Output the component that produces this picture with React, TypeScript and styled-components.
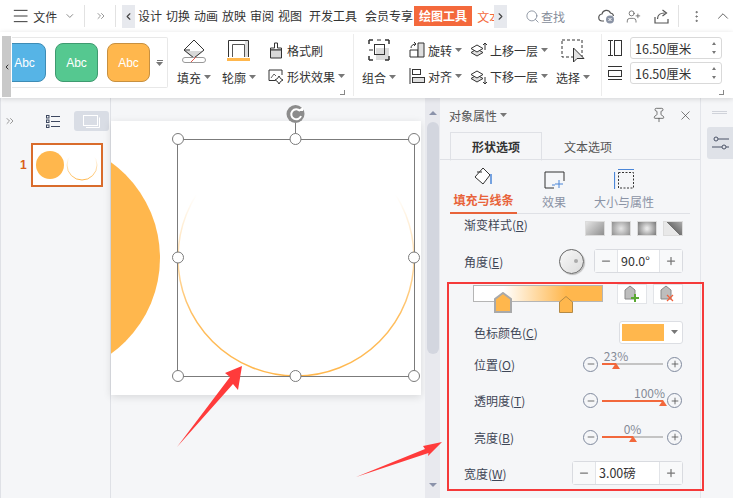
import React from "react";
import styled, { createGlobalStyle } from "styled-components";
import {
  ChevronDown,
  ChevronLeft,
  ChevronRight,
  ChevronUp,
  ChevronsRight,
  EllipsisVertical,
  Menu,
  Minus,
  Pin,
  Plus,
  Search,
  UserPlus,
  X,
} from "lucide-react";

const ORANGE = "#ffb74d";
const ACCENT = "#f2683c";

const CaretDown = () => (
  <CaretSvg viewBox="0 0 7 4" width="7" height="4">
    <path d="M0 0h7L3.5 4z" fill="#777" />
  </CaretSvg>
);

const FillIcon = () => (
  <svg width="26" height="25" viewBox="0 0 26 25">
    <path d="M3 12 13 20 23 12z" fill="#d8d8d8" />
    <path d="M13 1 23 11 13 19 3 11z" fill="none" stroke="#333" />
    <path d="M3 11h6" stroke="#333" />
    <rect x="1.5" y="18.5" width="23" height="5" rx="2.5" fill="#fff" stroke="#999" />
    <path d="M10 23 15 18" stroke="#e2574c" />
  </svg>
);

const OutlineIcon = () => (
  <svg width="24" height="24" viewBox="0 0 24 24">
    <path d="M1.5 18V1.5h20V18" fill="none" stroke="#333" />
    <path d="M5.5 18V5.5h12V18" fill="none" stroke="#555" />
    <path d="M18 2h3v16h-3z" fill="#ddd" />
    <rect x="0" y="19" width="23" height="3" fill={ORANGE} />
  </svg>
);

const BrushIcon = () => (
  <svg width="14" height="17" viewBox="0 0 14 17">
    <path d="M5.5 1h3v5h4v2h-11V6h4z" fill="#fff" stroke="#333" />
    <path d="M1.5 8h11v8h-11z" fill="#d8d8d8" stroke="#333" />
  </svg>
);

const EffectIcon = () => (
  <svg width="16" height="15" viewBox="0 0 16 15">
    <path d="M7 11.5H1V1h13v5" fill="none" stroke="#333" />
    <path d="M3 9 6 5l2 2" fill="none" stroke="#666" />
    <path d="M11 7l1.5 2.5L15 11l-2.500 1.500L11 15l-1.500-2.500L7 11l2.500-1.500z" fill="none" stroke="#333" />
  </svg>
);

const GroupIcon = () => (
  <svg width="22" height="22" viewBox="0 0 22 22">
    <rect x="8" y="9" width="13" height="12" fill="#dcdcdc" />
    <rect x="6.500" y="5.500" width="10" height="10" fill="none" stroke="#333" />
    <path d="M1 1h4M1 1v4M17 1h4M21 1v4M1 21h4M1 21v-4M17 21h4M21 21v-4" stroke="#333" strokeWidth="1.500" fill="none" />
    <path d="M1 11h4M9 1h4" stroke="#333" />
  </svg>
);

const RotateIcon = () => (
  <svg width="16" height="16" viewBox="0 0 16 16">
    <path d="M1 15V8h8v7z" fill="none" stroke="#333" />
    <path d="M9 15V1h6v14z" fill="#dedede" stroke="#333" />
    <path d="M2 6c0-2.500 2-4 5-4M5 0l2 2-2 2" fill="none" stroke="#333" />
  </svg>
);

const AlignIcon = () => (
  <svg width="16" height="16" viewBox="0 0 16 16">
    <path d="M1 0v16" stroke="#333" />
    <rect x="3.500" y="1.500" width="8" height="5" fill="#fff" stroke="#333" />
    <rect x="3.500" y="9.500" width="12" height="5" fill="#dedede" stroke="#333" />
  </svg>
);

const LayerIcon = ({ up }: { up?: boolean }) => (
  <svg width="17" height="17" viewBox="0 0 17 17">
    <path d="M1 10.500 7 7l6 3.500L7 14z" fill="#dedede" stroke="#333" />
    <path d="M1 6.500 7 3l6 3.500L7 10z" fill="#fff" stroke="#333" />
    {up ? (
      <path d="M15 8V1M13 3l2-2 2 2" fill="none" stroke="#333" />
    ) : (
      <path d="M15 9v7M13 14l2 2 2-2" fill="none" stroke="#333" />
    )}
  </svg>
);

const SelectIcon = () => (
  <svg width="24" height="25" viewBox="0 0 24 25">
    <rect x="1" y="1" width="20" height="17" fill="none" stroke="#333" strokeDasharray="3 2" />
    <path d="M12.500 9 12.500 23 16 19.500H23z" fill="#e3e3e3" stroke="#333" />
  </svg>
);

const CloudIcon = () => (
  <svg width="17" height="16" viewBox="0 0 17 16">
    <path d="M6 13H4.500a3.500 3.500 0 0 1-.5-7 4.500 4.500 0 0 1 8.500-1A3.500 3.500 0 0 1 15.500 8" fill="none" stroke="#555" strokeWidth="1.200" />
    <circle cx="12" cy="11.500" r="4" fill="#8a93a5" />
    <path d="M10.500 10l3 3M13.500 10l-3 3" stroke="#fff" />
  </svg>
);

const ShareIcon = () => (
  <svg width="15" height="15" viewBox="0 0 15 15">
    <path d="M1 8v6h13v-4" fill="none" stroke="#555" strokeWidth="1.200" />
    <path d="M3.500 10c0-4 3-6 7-6M8.500 1l4 3-4 3" fill="none" stroke="#555" strokeWidth="1.200" />
  </svg>
);

const HeightIcon = () => (
  <svg width="14" height="16" viewBox="0 0 14 16">
    <path d="M0 .5h5M0 15.500h5M2.500 1v14" stroke="#333" />
    <rect x="6.500" y=".5" width="7" height="15" fill="none" stroke="#333" />
  </svg>
);

const WidthIcon = () => (
  <svg width="14" height="14" viewBox="0 0 14 14">
    <path d="M0 .5h14M0 13.500h14" stroke="#333" />
    <rect x=".5" y="4.500" width="13" height="6" fill="none" stroke="#333" />
  </svg>
);

const OutlineViewIcon = () => (
  <svg width="14" height="13" viewBox="0 0 14 13">
    <path d="M5 1.500h9M5 6.500h9M5 11.500h9" stroke="#3d4860" />
    <rect x=".5" y=".5" width="2.500" height="2.500" fill="none" stroke="#3d4860" />
    <rect x=".5" y="5" width="2.500" height="2.500" fill="none" stroke="#3d4860" />
    <rect x=".5" y="10" width="2.500" height="2.500" fill="none" stroke="#3d4860" />
  </svg>
);

const SlideViewIcon = () => (
  <svg width="17" height="13" viewBox="0 0 17 13">
    <rect x=".5" y=".5" width="14" height="10" fill="none" stroke="#fff" />
    <path d="M16.500 2.500V12.500H3" fill="none" stroke="#fff" />
  </svg>
);

const Thumbnail = () => (
  <svg width="68" height="40" viewBox="0 0 68 40">
    <defs>
      <linearGradient id="thumbRing" x1="0" y1="0" x2="0" y2="1">
        <stop offset="0.23" stopColor={ORANGE} stopOpacity="0" />
        <stop offset="1" stopColor={ORANGE} />
      </linearGradient>
    </defs>
    <circle cx="17" cy="20" r="14" fill={ORANGE} />
    <circle cx="49" cy="20" r="15" fill="none" stroke="url(#thumbRing)" />
  </svg>
);

const ShapeTabFill = () => (
  <svg width="20" height="20" viewBox="0 0 20 20">
    <path d="M9 1 16 8 9 17 1 10z" fill="#fff" stroke="#333" />
    <path d="M3 5h5" stroke="#333" />
    <path d="M17 7v10" stroke="#4a86d8" strokeWidth="1.500" />
  </svg>
);

const ShapeTabEffect = () => (
  <svg width="21" height="18" viewBox="0 0 21 18">
    <path d="M10 17H1V1h19v9" fill="none" stroke="#333" />
    <path d="M15 9v8M11 13h8M8 14h3" stroke="#4a86d8" />
  </svg>
);

const ShapeTabSize = () => (
  <svg width="20" height="20" viewBox="0 0 20 20">
    <rect x="4.500" y="3.500" width="15" height="15.500" fill="none" stroke="#333" strokeDasharray="2 1.500" />
    <path d="M4 .5h16M.5 3v17" stroke="#4a86d8" strokeWidth="1.200" />
  </svg>
);

const StopMarker = ({ selected }: { selected?: boolean }) =>
  selected ? (
    <svg width="18" height="21" viewBox="0 0 18 21">
      <path d="M9 1 17 7V20H1V7z" fill={ORANGE} stroke="#a9a9a9" strokeWidth="2" />
    </svg>
  ) : (
    <svg width="14" height="17" viewBox="0 0 14 17">
      <path d="M7 .5 13.500 6V16.500H.5V6z" fill={ORANGE} stroke="#b58a45" />
    </svg>
  );

const StopButtonIcon = ({ remove }: { remove?: boolean }) => (
  <svg width="16" height="18" viewBox="0 0 16 18">
    <path d="M6 1 11 5V14H1V5z" fill="#bdbdbd" stroke="#888" />
    {remove ? (
      <path d="M7 10l6 6M13 10l-6 6" stroke="#f0603c" strokeWidth="1.300" />
    ) : (
      <path d="M11 9v8M7 13h8" stroke="#5aa832" strokeWidth="2" />
    )}
  </svg>
);

const SlidersIcon = () => (
  <svg width="17" height="15" viewBox="0 0 17 15">
    <circle cx="4" cy="3" r="2" fill="none" stroke="#4a5266" />
    <circle cx="12" cy="11" r="2" fill="none" stroke="#4a5266" />
    <path d="M6 3h11M0 11h10M14 11h3" stroke="#4a5266" />
  </svg>
);

const GRADIENT_STYLES = [
  "linear-gradient(135deg,#e4e4e4,#8f8f8f)",
  "radial-gradient(circle,#e6e6e6,#8f8f8f)",
  "radial-gradient(circle,#e6e6e6 10%,#777)",
  "linear-gradient(45deg,#e8e8e8 50%,#6f6f6f 50%,#aaa)",
];

const Slider = ({ label, pos, labelPos, name }: { label: string; pos: number; labelPos: number; name: React.ReactNode }) => (
  <PanelRow $indent>
    <PanelLabel>{name}</PanelLabel>
    <SliderWrap>
      <RoundButton><Minus size={10} /></RoundButton>
      <Track>
        <TrackFill style={{ width: `${pos}%` }} />
        <TrackValue style={{ left: `${labelPos}%` }}>{label}</TrackValue>
        <TrackThumb style={{ left: `${pos}%` }} />
      </Track>
      <RoundButton><Plus size={10} /></RoundButton>
    </SliderWrap>
  </PanelRow>
);

const Spin = ({ value, wide }: { value: string; wide?: boolean }) => (
  <SpinBox $wide={wide}>
    <SpinBtn><Minus size={12} strokeWidth={2.500} /></SpinBtn>
    <SpinValue>{value}</SpinValue>
    <SpinBtn><Plus size={12} strokeWidth={2.500} /></SpinBtn>
  </SpinBox>
);

const SizeField = ({ value }: { value: string }) => (
  <SizeInput>
    {value}
    <SpinArrows>
      <SpinArrow $up />
      <SpinArrow />
    </SpinArrows>
  </SizeInput>
);

export default function App() {
  return (
    <Page>
      <GlobalStyle />
      <TitleBar>
        <FileMenu>
          <Menu size={20} strokeWidth={1.200} />
          <span>文件</span>
          <ChevronDown size={12} color="#888" />
        </FileMenu>
        <BarSep $left={8} />
        <ChevronsRight size={12} color="#999" style={{ marginLeft: 10 }} />
        <BarSep $left={8} />
        <ScrollTab $left={6}><ChevronLeft size={11} strokeWidth={2.500} /></ScrollTab>
        <MenuTabs>
          <MenuTab>设计</MenuTab>
          <MenuTab>切换</MenuTab>
          <MenuTab>动画</MenuTab>
          <MenuTab>放映</MenuTab>
          <MenuTab>审阅</MenuTab>
          <MenuTab>视图</MenuTab>
          <MenuTab $left={3}>开发工具</MenuTab>
          <MenuTab $left={4}>会员专享</MenuTab>
          <ActiveTab>绘图工具</ActiveTab>
          <ClippedTab>文本工具</ClippedTab>
        </MenuTabs>
        <ScrollTab $left={0}><ChevronRight size={11} strokeWidth={2.500} /></ScrollTab>
        <SearchBox>
          <Search size={15} strokeWidth={1.300} color="#7d8594" />
          <span>查找</span>
        </SearchBox>
        <BarIcon $left={33}><CloudIcon /></BarIcon>
        <BarIcon $left={11}><UserPlus size={15} strokeWidth={1.200} color="#555" /></BarIcon>
        <BarIcon $left={13}><ShareIcon /></BarIcon>
        <BarSep $left={9} />
        <BarIcon $left={10}><EllipsisVertical size={15} strokeWidth={1.500} color="#666" /></BarIcon>
        <BarIcon $left={10}><ChevronUp size={18} strokeWidth={1.200} color="#555" /></BarIcon>
      </TitleBar>

      <Ribbon>
        <GalleryScroll><ChevronLeft size={8} strokeWidth={3} /></GalleryScroll>
        <Gallery>
          <Swatches>
            <Swatch $bg="#56b4e6" $line="#3e8cb5">Abc</Swatch>
            <Swatch $bg="#55c890" $line="#3f9a70">Abc</Swatch>
            <Swatch $bg={ORANGE} $line="#c79040">Abc</Swatch>
          </Swatches>
          <GalleryMore>
            <MoreBar />
            <CaretDown />
          </GalleryMore>
        </Gallery>
        <BigButton $left={8} $width={36}>
          <BigIcon><FillIcon /></BigIcon>
          <BigLabel>填充<CaretDown /></BigLabel>
        </BigButton>
        <BigButton $left={9} $width={36}>
          <BigIcon><OutlineIcon /></BigIcon>
          <BigLabel>轮廓<CaretDown /></BigLabel>
        </BigButton>
        <SmallColumn $left={10} $width={78}>
          <SmallButton><SmallIcon><BrushIcon /></SmallIcon>格式刷</SmallButton>
          <SmallButton><SmallIcon><EffectIcon /></SmallIcon>形状效果<CaretDown /></SmallButton>
          <Launcher />
        </SmallColumn>
        <RibbonSep $left={8} />
        <BigButton $left={9} $width={32}>
          <BigIcon><GroupIcon /></BigIcon>
          <BigLabel>组合<CaretDown /></BigLabel>
        </BigButton>
        <SmallColumn $left={13} $width={54}>
          <SmallButton><SmallIcon><RotateIcon /></SmallIcon>旋转<CaretDown /></SmallButton>
          <SmallButton><SmallIcon><AlignIcon /></SmallIcon>对齐<CaretDown /></SmallButton>
        </SmallColumn>
        <SmallColumn $left={8} $width={76}>
          <SmallButton><SmallIcon><LayerIcon up /></SmallIcon>上移一层<CaretDown /></SmallButton>
          <SmallButton><SmallIcon><LayerIcon /></SmallIcon>下移一层<CaretDown /></SmallButton>
        </SmallColumn>
        <BigButton $left={9} $width={36}>
          <BigIcon><SelectIcon /></BigIcon>
          <BigLabel>选择<CaretDown /></BigLabel>
        </BigButton>
        <RibbonSep $left={10} />
        <SizeColumn>
          <SizeRow>
            <HeightIcon />
            <SizeField value="16.50厘米" />
          </SizeRow>
          <SizeRow>
            <WidthIcon />
            <SizeField value="16.50厘米" />
          </SizeRow>
          <Launcher />
        </SizeColumn>
      </Ribbon>

      <Workspace>
        <Sidebar>
          <SidebarTools>
            <ChevronsRight size={12} color="#999" />
            <OutlineViewIcon />
            <ViewButton><SlideViewIcon /></ViewButton>
          </SidebarTools>
          <ThumbRow>
            <ThumbNumber>1</ThumbNumber>
            <ThumbFrame><Thumbnail /></ThumbFrame>
          </ThumbRow>
        </Sidebar>

        <Canvas>
          <Slide>
            <SlideDrawing viewBox="111 121 310 274">
              <defs>
                <clipPath id="slideClip">
                  <rect x="111" y="121" width="310" height="274" />
                </clipPath>
                <linearGradient id="ring" x1="0" y1="0" x2="0" y2="1">
                  <stop offset="0.23" stopColor={ORANGE} stopOpacity="0" />
                  <stop offset="0.75" stopColor={ORANGE} stopOpacity="0.9" />
                  <stop offset="1" stopColor={ORANGE} />
                </linearGradient>
              </defs>
              <circle cx="42" cy="258" r="118" fill={ORANGE} clipPath="url(#slideClip)" />
              <circle cx="296" cy="258" r="118" fill="none" stroke="url(#ring)" strokeWidth="1.500" />
              <rect x="177.500" y="139.500" width="237" height="237" fill="none" stroke="#7b7b7b" />
              <path d="M295.500 123v16" stroke="#7b7b7b" />
              <circle cx="295.500" cy="114" r="9" fill="#8c8c8c" />
              <path d="M300 111a5 5 0 1 0 1 5" fill="none" stroke="#fff" strokeWidth="2" />
              <path d="M297 111h6v-4z" fill="#fff" />
              {[
                [178, 139],
                [295.500, 139],
                [414, 139],
                [178, 257.500],
                [414, 257.500],
                [178, 376],
                [295.500, 376],
                [414, 376],
              ].map(([cx, cy]) => (
                <circle key={`${cx}-${cy}`} cx={cx} cy={cy} r="5.500" fill="#fff" stroke="#7b7b7b" />
              ))}
            </SlideDrawing>
          </Slide>
        </Canvas>

        <ScrollBar>
          <ScrollArrow $up />
          <ScrollThumb />
          <ScrollArrow />
        </ScrollBar>

        <Panel>
          <PanelHeader>
            <PanelTitle>对象属性<CaretDown /></PanelTitle>
            <PanelTools>
              <Pin size={16} strokeWidth={1.100} color="#444" />
              <X size={15} strokeWidth={1.100} color="#444" />
            </PanelTools>
          </PanelHeader>
          <OptionTabs>
            <OptionTab $active>形状选项</OptionTab>
            <OptionTab>文本选项</OptionTab>
          </OptionTabs>
          <ShapeTabs>
            <ShapeTab $width={67} $active>
              <ShapeTabFill />
              <span>填充与线条</span>
            </ShapeTab>
            <ShapeTab $width={74}>
              <ShapeTabEffect />
              <span>效果</span>
            </ShapeTab>
            <ShapeTab $width={66}>
              <ShapeTabSize />
              <span>大小与属性</span>
            </ShapeTab>
          </ShapeTabs>
          <PanelBody>
            <PanelRow $height={20}>
              <PanelLabel>渐变样式(<u>R</u>)</PanelLabel>
              <StyleList>
                {GRADIENT_STYLES.map((bg) => (
                  <StyleThumb key={bg} style={{ background: bg }} />
                ))}
              </StyleList>
            </PanelRow>
            <PanelRow $top={15}>
              <PanelLabel>角度(<u>E</u>)</PanelLabel>
              <AngleControls>
                <Dial><DialDot /></Dial>
                <Spin value="90.0°" />
              </AngleControls>
            </PanelRow>
            <GradientRow>
              <GradientBar>
                <GradientStop $left={23} $selected><StopMarker selected /></GradientStop>
                <GradientStop $left={72}><StopMarker /></GradientStop>
              </GradientBar>
              <StopButtons>
                <StopButton><StopButtonIcon /></StopButton>
                <StopButton><StopButtonIcon remove /></StopButton>
              </StopButtons>
            </GradientRow>
            <PanelRow $indent $top={16}>
              <PanelLabel>色标颜色(<u>C</u>)</PanelLabel>
              <ColorPicker>
                <ColorChip />
                <CaretDown />
              </ColorPicker>
            </PanelRow>
            <SliderList>
              <Slider name={<>位置(<u>O</u>)</>} label="23%" pos={23} labelPos={23} />
              <Slider name={<>透明度(<u>T</u>)</>} label="100%" pos={100} labelPos={78} />
              <Slider name={<>亮度(<u>B</u>)</>} label="0%" pos={50} labelPos={50} />
            </SliderList>
            <PanelRow $top={12}>
              <PanelLabel>宽度(<u>W</u>)</PanelLabel>
              <Spin value="3.00磅" wide />
            </PanelRow>
          </PanelBody>
        </Panel>

        <RightRail>
          <RailGrip />
          <RailButton><SlidersIcon /></RailButton>
        </RightRail>
      </Workspace>

      <RedFrame />
      <ArrowLayer viewBox="0 0 733 498">
        <polygon points="242,366 225,373 230,377 177,447 233,384 238,390" fill="#ff3b3b" />
        <polygon points="442,442 423,446 425,449 356,477 428.500,453 428,456" fill="#ff3b3b" />
      </ArrowLayer>
    </Page>
  );
}

const GlobalStyle = createGlobalStyle`
  html, body {
    margin: 0;
    padding: 0;
    background: #f5f6f8;
    overflow: hidden;
  }
  * {
    box-sizing: border-box;
  }
  body {
    font-family: "Noto Sans CJK SC", "Liberation Sans", sans-serif;
    font-size: 12px;
    color: #3a3f4b;
  }
`;

const Page = styled.div`
  position: relative;
  display: flex;
  flex-direction: column;
  width: 733px;
  height: 498px;
  overflow: hidden;
`;

const CaretSvg = styled.svg`
  flex: none;
  margin-left: 3px;
`;

const TitleBar = styled.div`
  display: flex;
  align-items: center;
  height: 32px;
  padding-left: 14px;
  background: #fff;
  flex: none;
`;

const FileMenu = styled.div`
  display: flex;
  align-items: center;
  gap: 3px;
  width: 65px;
  margin-left: -3px;
  color: #333;
  white-space: nowrap;
  flex: none;

  span {
    margin-right: 4px;
  }
`;

const BarSep = styled.div<{ $left: number }>`
  width: 1px;
  height: 22px;
  margin-left: ${(p) => p.$left}px;
  background: #e2e2e2;
  flex: none;
`;

const ScrollTab = styled.div<{ $left: number }>`
  display: flex;
  align-items: center;
  justify-content: center;
  width: 13px;
  height: 23px;
  margin-left: ${(p) => p.$left}px;
  background: #e7e9ee;
  color: #444;
  flex: none;
`;

const MenuTabs = styled.div`
  display: flex;
  align-items: center;
  width: 359px;
  padding-left: 3px;
  overflow: hidden;
  flex: none;
`;

const MenuTab = styled.div<{ $left?: number }>`
  margin-left: ${(p) => p.$left ?? 0}px;
  margin-right: 4px;
  line-height: 20px;
  color: #333;
  white-space: nowrap;
  flex: none;
`;

const ActiveTab = styled.div`
  width: 58px;
  height: 20px;
  margin-left: -3px;
  line-height: 20px;
  text-align: center;
  background: #f4693c;
  color: #fff;
  font-weight: 700;
  flex: none;
`;

const ClippedTab = styled.div`
  margin-left: 5px;
  color: #f4693c;
  white-space: nowrap;
  flex: none;
`;

const SearchBox = styled.div`
  display: flex;
  align-items: center;
  gap: 1px;
  margin-left: 18px;
  color: #868d9a;
  white-space: nowrap;
  flex: none;
`;

const BarIcon = styled.div<{ $left: number }>`
  display: flex;
  align-items: center;
  margin-left: ${(p) => p.$left}px;
  flex: none;
`;

const Ribbon = styled.div`
  position: relative;
  z-index: 2;
  display: flex;
  height: 66px;
  padding-left: 2px;
  background: #fff;
  box-shadow: 0 1px 5px rgba(0, 0, 0, 0.14);
  flex: none;
`;

const GalleryScroll = styled.div`
  display: flex;
  align-items: center;
  justify-content: center;
  width: 9px;
  height: 61px;
  margin-top: 4px;
  background: #c9c9c9;
  color: #333;
  flex: none;
`;

const Gallery = styled.div`
  display: flex;
  align-items: center;
  justify-content: space-between;
  width: 156px;
  height: 51px;
  margin-top: 5px;
  margin-left: 1px;
  padding-right: 4px;
  border: 1px solid #e8e8e8;
  border-left: none;
  border-radius: 0 2px 2px 0;
  overflow: hidden;
  flex: none;
`;

const Swatches = styled.div`
  display: flex;
  gap: 9px;
  margin-left: -9px;
`;

const Swatch = styled.div<{ $bg: string; $line: string }>`
  display: flex;
  align-items: center;
  justify-content: center;
  width: 43px;
  height: 39px;
  border: 1px solid ${(p) => p.$line};
  border-radius: 8px;
  background: ${(p) => p.$bg};
  color: #fff;
  font-family: "Liberation Sans", sans-serif;
  font-size: 12px;
  flex: none;
`;

const GalleryMore = styled.div`
  display: flex;
  flex-direction: column;
  align-items: center;
  gap: 1px;
`;

const MoreBar = styled.div`
  width: 6px;
  height: 1px;
  margin-left: 3px;
  background: #777;
`;

const BigButton = styled.div<{ $left: number; $width: number }>`
  display: flex;
  flex-direction: column;
  align-items: center;
  width: ${(p) => p.$width}px;
  margin-left: ${(p) => p.$left}px;
  padding-top: 7px;
  flex: none;
`;

const BigIcon = styled.div`
  display: flex;
  align-items: flex-start;
  justify-content: center;
  height: 29px;
`;

const BigLabel = styled.div`
  display: flex;
  align-items: center;
  height: 18px;
  color: #333;
  white-space: nowrap;
`;

const SmallColumn = styled.div<{ $left: number; $width: number }>`
  position: relative;
  display: flex;
  flex-direction: column;
  gap: 2px;
  width: ${(p) => p.$width}px;
  margin-left: ${(p) => p.$left}px;
  padding-top: 6px;
  flex: none;
`;

const SmallButton = styled.div`
  display: flex;
  align-items: center;
  height: 24px;
  color: #333;
  white-space: nowrap;
`;

const SmallIcon = styled.div`
  display: flex;
  align-items: center;
  justify-content: center;
  width: 17px;
  margin-right: 3px;
  flex: none;
`;

const Launcher = styled.div`
  position: absolute;
  right: 0;
  bottom: 3px;
  width: 5px;
  height: 5px;
  border-right: 1px solid #888;
  border-bottom: 1px solid #888;
`;

const RibbonSep = styled.div<{ $left: number }>`
  width: 1px;
  height: 62px;
  margin-top: 2px;
  margin-left: ${(p) => p.$left}px;
  background: #ececec;
  flex: none;
`;

const SizeColumn = styled.div`
  position: relative;
  display: flex;
  flex-direction: column;
  gap: 3px;
  width: 116px;
  margin-left: 6px;
  padding-top: 5px;
  flex: none;
`;

const SizeRow = styled.div`
  display: flex;
  align-items: center;
  justify-content: space-between;
  width: 114px;
  height: 22px;
`;

const SizeInput = styled.div`
  display: flex;
  align-items: center;
  justify-content: space-between;
  width: 92px;
  height: 22px;
  padding: 0 5px 0 4px;
  border: 1px solid #d9d9d9;
  border-radius: 3px;
  font-size: 12.500px;
  color: #333;
`;

const SpinArrows = styled.div`
  display: flex;
  flex-direction: column;
  gap: 6px;
`;

const SpinArrow = styled.div<{ $up?: boolean }>`
  width: 0;
  height: 0;
  border-left: 2.500px solid transparent;
  border-right: 2.500px solid transparent;
  ${(p) => (p.$up ? "border-bottom: 3px solid #777;" : "border-top: 3px solid #777;")}
`;

const Workspace = styled.div`
  display: flex;
  flex: 1;
  min-height: 0;
`;

const Sidebar = styled.div`
  width: 111px;
  border-left: 1px solid #dfe1e6;
  border-right: 1px solid #dfe1e6;
  flex: none;
`;

const SidebarTools = styled.div`
  display: flex;
  align-items: center;
  height: 20px;
  margin-top: 13px;
  padding-left: 3px;
  gap: 30px;
`;

const ViewButton = styled.div`
  display: flex;
  align-items: center;
  justify-content: center;
  width: 35px;
  height: 20px;
  margin-left: -16px;
  border-radius: 3px;
  background: #d9dde5;
`;

const ThumbRow = styled.div`
  display: flex;
  align-items: center;
  margin-top: 12px;
  padding-left: 19px;
`;

const ThumbNumber = styled.div`
  width: 11px;
  color: #d9601a;
  font-family: "Liberation Sans", sans-serif;
  font-weight: 700;
`;

const ThumbFrame = styled.div`
  display: flex;
  width: 72px;
  height: 44px;
  border: 2px solid #d96c2c;
  background: #fff;
`;

const Canvas = styled.div`
  width: 314px;
  padding-top: 23px;
  flex: none;
`;

const Slide = styled.div`
  width: 310px;
  height: 274px;
  background: #fff;
  box-shadow: 0 2px 8px rgba(0, 0, 0, 0.12);
`;

const SlideDrawing = styled.svg`
  display: block;
  width: 310px;
  height: 274px;
  overflow: visible;
`;

const ScrollBar = styled.div`
  display: flex;
  flex-direction: column;
  align-items: center;
  width: 15px;
  padding: 13px 0 11px;
  background: #e8e9ee;
  flex: none;
`;

const ScrollArrow = styled.div<{ $up?: boolean }>`
  width: 0;
  height: 0;
  border-left: 4px solid transparent;
  border-right: 4px solid transparent;
  ${(p) => (p.$up ? "border-bottom: 4px solid #8b93aa;" : "border-top: 4px solid #8b93aa;")}
  ${(p) => (!p.$up ? "margin-top: auto;" : "")}
`;

const ScrollThumb = styled.div`
  width: 12px;
  height: 232px;
  margin-top: 7px;
  border-radius: 6px;
  background: #d3d6df;
`;

const Panel = styled.div`
  display: flex;
  flex-direction: column;
  width: 260px;
  background: #f5f6f8;
  flex: none;
`;

const PanelHeader = styled.div`
  display: flex;
  align-items: center;
  justify-content: space-between;
  height: 34px;
  padding: 0 7px 0 9px;
  flex: none;
`;

const PanelTitle = styled.div`
  display: flex;
  align-items: center;
  color: #555;
`;

const PanelTools = styled.div`
  display: flex;
  align-items: center;
  gap: 11px;
`;

const OptionTabs = styled.div`
  display: flex;
  height: 28px;
  padding-left: 10px;
  border-bottom: 1px solid #dfe1e6;
  flex: none;
`;

const OptionTab = styled.div<{ $active?: boolean }>`
  display: flex;
  align-items: center;
  justify-content: center;
  width: 92px;
  height: ${(p) => (p.$active ? 29 : 28)}px;
  border: ${(p) => (p.$active ? "1px solid #dfe1e6" : "none")};
  border-bottom: ${(p) => (p.$active ? "1px solid #f5f6f8" : "none")};
  font-weight: ${(p) => (p.$active ? 700 : 400)};
  color: ${(p) => (p.$active ? "#333" : "#555")};
`;

const ShapeTabs = styled.div`
  display: flex;
  height: 54px;
  margin: 0 10px;
  border-bottom: 1px solid #dfe1e6;
  flex: none;
`;

const ShapeTab = styled.div<{ $width: number; $active?: boolean }>`
  display: flex;
  flex-direction: column;
  align-items: center;
  justify-content: flex-end;
  gap: 4px;
  width: ${(p) => p.$width}px;
  height: 54px;
  padding-bottom: 4px;
  border-bottom: ${(p) => (p.$active ? `2px solid #e8633a` : "none")};
  color: ${(p) => (p.$active ? "#e8633a" : "#8b93a5")};
  font-weight: ${(p) => (p.$active ? 700 : 400)};
  white-space: nowrap;
`;

const PanelBody = styled.div`
  flex: 1;
  min-height: 0;
  padding: 0 17px 0 24px;
  overflow: hidden;
`;

const PanelRow = styled.div<{ $height?: number; $top?: number; $indent?: boolean }>`
  display: flex;
  align-items: center;
  justify-content: space-between;
  height: ${(p) => p.$height ?? 24}px;
  margin-top: ${(p) => p.$top ?? 0}px;
  padding-left: ${(p) => (p.$indent ? 10 : 0)}px;
`;

const PanelLabel = styled.div`
  color: #3f4656;
  white-space: nowrap;
`;

const StyleList = styled.div`
  display: flex;
  gap: 6px;
`;

const StyleThumb = styled.div`
  width: 20px;
  height: 15px;
  margin-top: 8px;
  border: 1px solid #dcdcdc;
`;

const AngleControls = styled.div`
  display: flex;
  align-items: center;
  gap: 10px;
`;

const Dial = styled.div`
  display: flex;
  align-items: center;
  justify-content: flex-end;
  width: 25px;
  height: 25px;
  padding-right: 5px;
  border: 1px solid #666;
  border-radius: 50%;
  background: linear-gradient(135deg, #f8f8f8, #dcdcdc);
  box-shadow: 1px 1px 1px #bbb;
`;

const DialDot = styled.div`
  width: 4px;
  height: 4px;
  border-radius: 50%;
  background: #aaa;
`;

const SpinBox = styled.div<{ $wide?: boolean }>`
  display: flex;
  align-items: center;
  width: ${(p) => (p.$wide ? 111 : 89)}px;
  height: 24px;
  border: 1px solid #d9dbe0;
  border-radius: 3px;
  background: #fff;
`;

const SpinBtn = styled.div`
  display: flex;
  align-items: center;
  justify-content: center;
  width: 22px;
  height: 22px;
  background: #f8f9fa;
  color: #777;
  flex: none;
`;

const SpinValue = styled.div`
  flex: 1;
  height: 22px;
  padding-left: 3px;
  border-left: 1px solid #e2e4e8;
  border-right: 1px solid #e2e4e8;
  line-height: 22px;
  font-size: 12.500px;
  color: #333;
  white-space: nowrap;
`;

const GradientRow = styled.div`
  display: flex;
  justify-content: space-between;
  height: 20px;
  margin-top: 11px;
  padding-left: 9px;
`;

const GradientBar = styled.div`
  position: relative;
  width: 130px;
  height: 17px;
  margin-top: 1px;
  border: 1px solid #b5b5b5;
  background: linear-gradient(90deg, #fff 23%, ${ORANGE} 72%);
`;

const GradientStop = styled.div<{ $left: number; $selected?: boolean }>`
  position: absolute;
  left: ${(p) => p.$left}%;
  top: ${(p) => (p.$selected ? 6 : 10)}px;
  display: flex;
  transform: translateX(-50%);
`;

const StopButtons = styled.div`
  display: flex;
  gap: 6px;
`;

const StopButton = styled.div`
  display: flex;
  align-items: center;
  justify-content: center;
  width: 30px;
  height: 20px;
  border: 1px solid #e2e4e8;
  background: #fff;
`;

const ColorPicker = styled.div`
  display: flex;
  align-items: center;
  width: 64px;
  height: 23px;
  padding: 0 4px 0 2px;
  border: 1px solid #dcdee3;
  border-radius: 3px;
  background: #fff;
`;

const ColorChip = styled.div`
  width: 47px;
  height: 17px;
  margin-right: 4px;
  background: ${ORANGE};
`;

const SliderList = styled.div`
  display: flex;
  flex-direction: column;
  gap: 12.500px;
  margin-top: 8px;
`;

const SliderWrap = styled.div`
  display: flex;
  align-items: center;
  gap: 4px;
  margin-right: 1px;
`;

const RoundButton = styled.div`
  display: flex;
  align-items: center;
  justify-content: center;
  width: 15px;
  height: 15px;
  border: 1px solid #808a9e;
  border-radius: 50%;
  color: #555;
`;

const Track = styled.div`
  position: relative;
  width: 61px;
  height: 2px;
  background: #c4c4c4;
`;

const TrackFill = styled.div`
  height: 2px;
  background: ${ACCENT};
`;

const TrackValue = styled.div`
  position: absolute;
  top: -15px;
  transform: translateX(-50%);
  line-height: 16px;
  color: #858b97;
  white-space: nowrap;
`;

const TrackThumb = styled.div`
  position: absolute;
  top: 0;
  width: 0;
  height: 0;
  margin-left: -4px;
  border-left: 4px solid transparent;
  border-right: 4px solid transparent;
  border-bottom: 6px solid ${ACCENT};
`;

const RightRail = styled.div`
  flex: 1;
  padding: 13px 0 0 6px;
  border-left: 1px solid #e3e5ea;
  background: #f5f6f8;
`;

const RailGrip = styled.div`
  width: 15px;
  height: 3px;
  margin-left: 5px;
  border-top: 1px solid #d0d3da;
  border-bottom: 1px solid #d0d3da;
`;

const RailButton = styled.div`
  display: flex;
  align-items: center;
  justify-content: center;
  height: 32px;
  margin-top: 13px;
  border-radius: 3px 0 0 3px;
  background: #dfe2e8;
`;

const RedFrame = styled.div`
  position: absolute;
  z-index: 3;
  left: 447px;
  top: 282px;
  width: 257px;
  height: 209px;
  border: 2.500px solid #f53a3a;
  pointer-events: none;
`;

const ArrowLayer = styled.svg`
  position: absolute;
  z-index: 4;
  left: 0;
  top: 0;
  width: 733px;
  height: 498px;
  pointer-events: none;
`;
